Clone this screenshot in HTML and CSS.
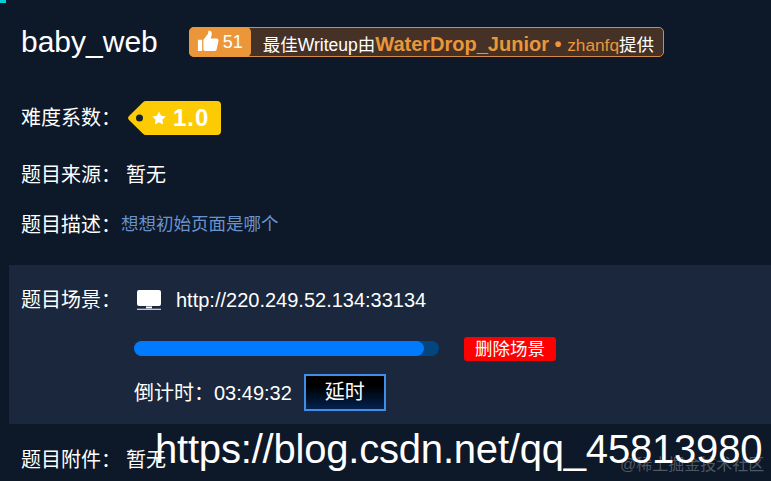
FILE: index.html
```html
<!DOCTYPE html>
<html lang="zh">
<head>
<meta charset="utf-8">
<title>baby_web</title>
<link rel="stylesheet" href="styles.css">
</head>
<body>
<div class="corner"></div>
<header class="head">
  <h1 class="title">baby_web</h1>
  <div class="writeup">
    <span class="likes">
      <svg class="thumb" viewBox="0 0 24 24" width="22" height="22"><path fill="#fff" d="M1 10.5h4.6V23H1zM7 10.5 11.4 5c.8-1.2 1-2.6 1-4.1 2.3-.4 3.7 1 3.7 3.3 0 1.700-.5 3.300-1.200 5h6.400c1.500 0 2.400 1.300 2.100 2.700l-1.900 9.100c-.3 1.200-1.200 2-2.400 2H9.500C8 23 7 22.200 7 21z"/></svg>
      <span>51</span>
    </span>
    <span class="wtext">最佳Writeup由<b class="team">WaterDrop_Junior</b><b class="dot"> • </b><span class="user">zhanfq</span>提供</span>
  </div>
</header>
<div class="row r-diff">
  <span class="label">难度系数&#xFF1A;</span>
  <span class="tag">
    <svg class="tag-bg" viewBox="0 0 93 34" width="93" height="34"><path fill="#fdcb04" d="M18 0h71a4 4 0 0 1 4 4v26a4 4 0 0 1-4 4H18a4 4 0 0 1-3-1.300L1 19a3 3 0 0 1 0-4L15 1.300A4 4 0 0 1 18 0z"/><circle cx="11.500" cy="17" r="3.500" fill="#15202e"/><path fill="#fff" d="m31 10.500 2.100 4.300 4.700.7-3.400 3.300.8 4.700-4.200-2.200-4.200 2.200.8-4.700-3.400-3.300 4.700-.7z"/></svg>
    <span class="tag-num">1.0</span>
  </span>
</div>
<div class="row r-src">
  <span class="label">题目来源&#xFF1A;</span>
  <span class="value">暂无</span>
</div>
<div class="row r-desc">
  <span class="label">题目描述&#xFF1A;</span>
  <span class="desc">想想初始页面是哪个</span>
</div>
<section class="panel">
  <div class="scene">
    <span class="label">题目场景&#xFF1A;</span>
    <svg class="monitor" viewBox="0 0 24 20" width="24" height="20"><path fill="#fff" d="M2 0h20a2 2 0 0 1 2 2v12a2 2 0 0 1-2 2H2a2 2 0 0 1-2-2V2a2 2 0 0 1 2-2zM9 16.500h6v1.800H9zM0 18.700h24v1.100H0z"/></svg>
    <span class="url">http://220.249.52.134:33134</span>
  </div>
  <div class="progress-row">
    <div class="track"><div class="fill"></div></div>
    <button class="del">删除场景</button>
  </div>
  <div class="timer-row">
    <span class="timer">倒计时&#xFF1A;03:49:32</span>
    <button class="extend">延时</button>
  </div>
</section>
<div class="row r-file">
  <span class="label">题目附件&#xFF1A;</span>
  <span class="value">暂无</span>
</div>
<div class="mark2">@稀土掘金技术社区</div>
<div class="mark">https://blog.csdn.net/qq_45813980</div>
</body>
</html>
```
FILE: styles.css
```css
* { box-sizing: border-box; }
html, body { margin: 0; height: 100%; }
body {
  position: relative;
  width: 771px;
  height: 481px;
  overflow: hidden;
  background: #0d1829;
  color: #fff;
  font-family: "Liberation Sans", "Noto Sans CJK SC", sans-serif;
  font-size: 20px;
}
.corner { position: absolute; left: 0; top: 0; width: 6px; height: 3px; background: #00d0d8; }
.head { display: flex; align-items: center; height: 30px; margin: 27px 0 0 21px; }
.title { margin: 0; font-size: 30px; font-weight: 400; line-height: 30px; color: #fff; }
.writeup {
  display: flex;
  align-items: stretch;
  height: 30px;
  margin-left: 31px;
  width: 475px;
  background: #453126;
  border: 1px solid #d58a45;
  border-radius: 5px;
}
.likes {
  display: flex;
  align-items: center;
  gap: 4px;
  width: 62px;
  margin: -1px 0 -1px -1px;
  padding-left: 8px;
  background: #eb9639;
  border-radius: 5px;
  color: #fff;
  font-size: 18px;
}
.thumb { flex: none; margin-top: -3px; }
.wtext { display: block; margin-left: 12px; font-size: 17.500px; line-height: 30px; white-space: nowrap; padding-top: 1px; }
.team { color: #eb9639; font-size: 20px; }
.dot { color: #eb9639; font-size: 20px; }
.user { color: #eb9639; font-size: 17.300px; }
.row { display: flex; align-items: center; margin-left: 21px; }
.label { font-size: 20px; line-height: 24px; width: 105px; flex: none; }
.r-diff { margin-top: 44px; height: 34px; }
.tag { position: relative; display: block; width: 93px; height: 34px; margin-left: 2px; }
.tag-bg { display: block; }
.tag-num { position: absolute; left: 45px; top: 3px; font-size: 24px; line-height: 28px; font-weight: 700; color: #fff; letter-spacing: 1px; }
.r-src { margin-top: 28px; height: 24px; }
.value { font-size: 20px; line-height: 24px; }
.r-desc { margin-top: 26px; height: 24px; }
.r-desc .label { width: 100px; }
.desc { font-size: 17.500px; line-height: 22px; margin-top: -2px; color: #6a93cc; }
.panel { margin: 28px 0 0 9px; height: 159px; background: #1a273c; padding: 23px 0 0 12px; }
.scene { display: flex; align-items: center; height: 24px; }
.monitor { margin-left: 11px; flex: none; }
.url { margin-left: 15px; font-size: 20px; line-height: 24px; }
.progress-row { display: flex; align-items: center; margin: 25px 0 0 113px; }
.track { width: 305px; height: 15px; margin-top: -1px; border-radius: 8px; background: #03467f; }
.fill { width: 290px; height: 15px; border-radius: 8px; background: #007bff; }
.del {
  width: 92px;
  height: 24px;
  margin-left: 25px;
  padding: 0;
  border: 0;
  border-radius: 3px;
  background: #ff0000;
  color: #fff;
  font: 17.500px/24px "Liberation Sans", "Noto Sans CJK SC", sans-serif;
}
.timer-row { display: flex; align-items: center; margin: 13px 0 0 113px; height: 37px; }
.timer { font-size: 20px; line-height: 24px; }
.extend {
  width: 82px;
  height: 37px;
  margin-left: 12px;
  padding: 0;
  border: 2px solid #3f8fe8;
  background: linear-gradient(#000 30%, #03214f);
  color: #fff;
  font: 20px/33px "Liberation Sans", "Noto Sans CJK SC", sans-serif;
}
.r-file { margin-top: 24px; height: 24px; }
.mark {
  position: absolute;
  left: 155px;
  top: 424px;
  font-size: 40px;
  line-height: 50px;
  letter-spacing: -.2px;
  color: #fff;
  white-space: nowrap;
}
.mark2 {
  position: absolute;
  left: 620px;
  top: 456px;
  font-size: 16px;
  line-height: 18px;
  color: rgba(255,255,255,.28);
  white-space: nowrap;
}
```
